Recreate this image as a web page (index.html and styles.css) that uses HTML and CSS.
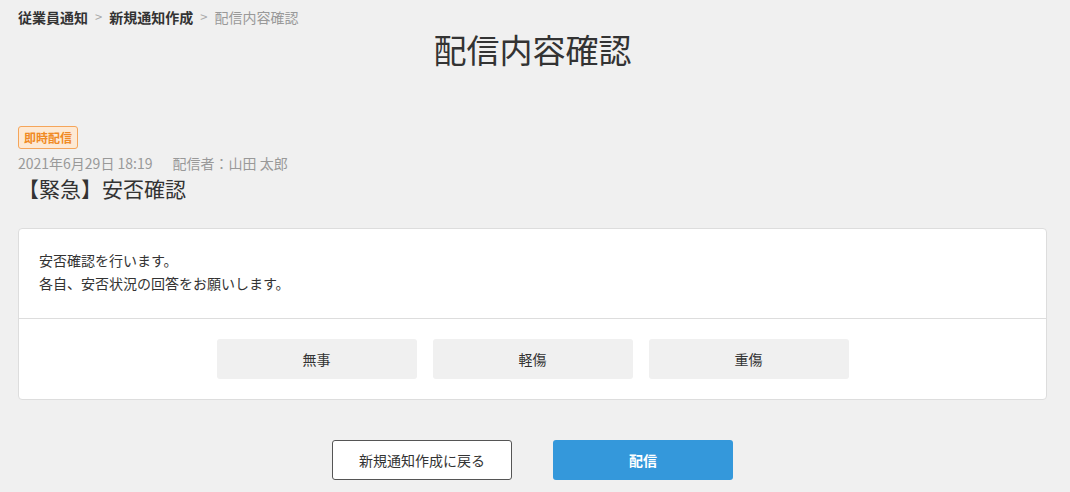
FILE: index.html
```html
<!DOCTYPE html>
<html lang="ja">

<head>
  <meta charset="UTF-8">
  <meta name="viewport" content="width=device-width, initial-scale=1.0">
  <title>配信内容確認</title>
  <link rel="stylesheet" href="styles.css">
</head>

<body>

  <div class="page">
    <div class="breadcrumb">
      <a class="crumb">従業員通知</a>
      <span class="sep">&gt;</span>
      <a class="crumb">新規通知作成</a>
      <span class="sep">&gt;</span>
      <span class="crumb current">配信内容確認</span>
    </div>

    <h1 class="page-title">配信内容確認</h1>

    <div class="notice-head">
      <span class="badge">即時配信</span>
      <div class="meta">2021年6月29日 18:19<span class="sender">配信者：山田 太郎</span></div>
      <h2 class="notice-title">【緊急】安否確認</h2>
    </div>

    <div class="card">
      <div class="card-body">
        <p>安否確認を行います。</p>
        <p>各自、安否状況の回答をお願いします。</p>
      </div>
      <div class="card-answers">
        <button class="answer">無事</button>
        <button class="answer">軽傷</button>
        <button class="answer">重傷</button>
      </div>
    </div>

    <div class="actions">
      <button class="btn btn-back">新規通知作成に戻る</button>
      <button class="btn btn-send">配信</button>
    </div>
  </div>

</body>

</html>
```

FILE: styles.css
```css
body {
  font-family: "Noto Sans CJK JP", "Noto Sans", sans-serif;
  background-color: #f0f0f0;
  color: #333;
  margin: 0;
}

.page {
  margin: 0 23px 0 18px;
  padding-top: 8px;
}

.breadcrumb {
  font-size: 14px;
  line-height: 18px;
  display: flex;
  align-items: center;
}

.crumb {
  font-weight: bold;
  color: #333;
}

.crumb.current {
  font-weight: normal;
  color: #999;
}

.sep {
  color: #aaa;
  margin: 0 7px;
  font-size: 13px;
}

.page-title {
  font-size: 33px;
  font-weight: normal;
  line-height: 40px;
  text-align: center;
  margin: 3px 0 0;
}

.notice-head {
  margin-top: 55px;
}

.badge {
  display: inline-block;
  font-size: 12px;
  font-weight: bold;
  line-height: 19px;
  padding: 1px 5px;
  color: #f08a24;
  background-color: #fde9d4;
  border: 1px solid #f5a55a;
  border-radius: 3px;
}

.meta {
  margin-top: 4px;
  font-size: 14px;
  line-height: 20px;
  color: #999;
}

.sender {
  margin-left: 20px;
}

.notice-title {
  font-size: 21px;
  font-weight: normal;
  line-height: 28px;
  margin: 1px 0 0;
}

.card {
  margin-top: 26px;
  background-color: #fff;
  border: 1px solid #ddd;
  border-radius: 4px;
}

.card-body {
  padding: 20px 20px 23px;
  font-size: 14px;
  line-height: 23px;
  border-bottom: 1px solid #ddd;
}

.card-body p {
  margin: 0;
}

.card-answers {
  display: flex;
  justify-content: center;
  gap: 16px;
  padding: 20px;
}

.answer {
  width: 200px;
  height: 40px;
  font-family: inherit;
  font-size: 14px;
  color: #333;
  background-color: #f0f0f0;
  border: none;
  border-radius: 3px;
}

.actions {
  display: flex;
  justify-content: center;
  gap: 41px;
  margin-top: 40px;
}

.btn {
  width: 180px;
  height: 40px;
  font-family: inherit;
  font-size: 14px;
  border-radius: 3px;
}

.btn-back {
  background-color: #fff;
  color: #333;
  border: 1px solid #555;
}

.btn-send {
  background-color: #3498db;
  color: #fff;
  font-weight: bold;
  border: none;
}
```
